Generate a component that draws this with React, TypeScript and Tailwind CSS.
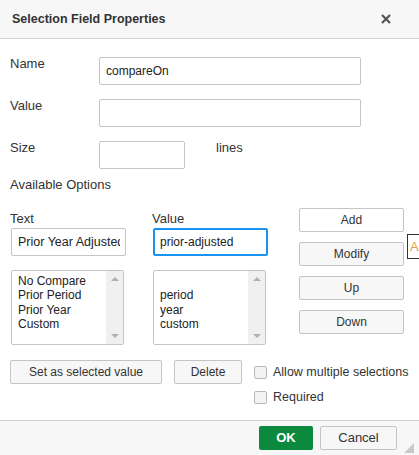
import React from "react";

const font = { fontFamily: '"Liberation Sans", Arial, sans-serif' };

const ListBox = ({ items }: { items: string[] }) => (
  <div className="flex h-[75px] w-[113px] border border-[#c4c4c4] bg-white rounded-[2px]">
    <div className="flex-1 pl-[6px] pt-[3px] text-[12px] leading-[14.4px] text-[#222] overflow-hidden">
      {items.map((it, i) => (
        <div key={i} className="h-[14.4px] whitespace-nowrap">
          {it}
        </div>
      ))}
    </div>
    <div className="w-[17px] bg-[#f0f0f0] flex flex-col items-center justify-between py-[6px]">
      <div className="w-0 h-0 border-l-[4px] border-r-[4px] border-b-[4px] border-l-transparent border-r-transparent border-b-[#b0b0b0]" />
      <div className="w-0 h-0 border-l-[4px] border-r-[4px] border-t-[4px] border-l-transparent border-r-transparent border-t-[#b0b0b0]" />
    </div>
  </div>
);

const SideButton = ({ label, white }: { label: string; white?: boolean }) => (
  <button
    className={`h-[24px] w-[105px] border border-[#c4c4c4] rounded-[2px] text-[12px] leading-[14px] text-[#333] ${
      white ? "bg-white" : "bg-[#f7f7f7]"
    }`}
  >
    {label}
  </button>
);

export default function App() {
  return (
    <div style={font} className="relative w-[419px] h-[455px] bg-white text-[#333] overflow-hidden">
      {/* Header */}
      <div className="h-[39px] bg-[#f7f7f7] border-b border-[#d0d0d0] flex items-center justify-between pl-[12px] pr-[28px]">
        <span className="text-[12.5px] font-bold text-[#333]">Selection Field Properties</span>
        <svg width="10" height="10" viewBox="0 0 10 10">
          <path d="M1 1L9 9M9 1L1 9" stroke="#555" strokeWidth="2.2" />
        </svg>
      </div>

      {/* Body */}
      <div className="pl-[10px] pt-[17px] h-[381px]">
        <div className="flex items-start">
          <span className="w-[89px] text-[13px] leading-[15px]">Name</span>
          <div className="mt-[1px] h-[28px] w-[262px] border border-[#c4c4c4] rounded-[2px] flex items-center pl-[6px] text-[12px] text-[#222]">
            compareOn
          </div>
        </div>
        <div className="flex items-start mt-[13px]">
          <span className="w-[89px] text-[13px] leading-[15px]">Value</span>
          <div className="mt-[1px] h-[28px] w-[262px] border border-[#c4c4c4] rounded-[2px]" />
        </div>
        <div className="flex items-start mt-[13px]">
          <span className="w-[89px] text-[13px] leading-[15px]">Size</span>
          <div className="mt-[1px] h-[28px] w-[86px] border border-[#c4c4c4] rounded-[2px]" />
          <span className="ml-[31px] text-[13px] leading-[15px]">lines</span>
        </div>
        <div className="mt-[8px] text-[13px] leading-[15px]">Available Options</div>

        <div className="flex mt-[16px]">
          <div className="w-[289px]">
            <div className="flex text-[13px] leading-[15px] mt-[3px]">
              <span className="w-[142px]">Text</span>
              <span>Value</span>
            </div>
            <div className="flex mt-[2px] pl-[1px]">
              <div className="h-[28px] w-[115px] border border-[#c4c4c4] rounded-[2px] flex items-center pl-[6px] pr-[5px] text-[12.5px] text-[#222]">
                <div className="overflow-hidden whitespace-nowrap">Prior Year Adjusted</div>
              </div>
              <div className="ml-[27px] h-[28px] w-[115px] border-2 border-[#1a93f0] rounded-[2px] flex items-center pl-[5px] text-[12px] text-[#222]">
                prior-adjusted
              </div>
            </div>
            <div className="flex mt-[14px] pl-[1px]">
              <ListBox items={["No Compare", "Prior Period", "Prior Year", "Custom"]} />
              <div className="ml-[29px]">
                <ListBox items={["", "period", "year", "custom"]} />
              </div>
            </div>
          </div>
          <div className="flex flex-col gap-[10px]">
            <SideButton label="Add" white />
            <SideButton label="Modify" />
            <SideButton label="Up" />
            <SideButton label="Down" />
          </div>
        </div>

        <div className="flex items-start mt-[15px]">
          <button className="h-[24px] w-[152px] border border-[#c4c4c4] rounded-[2px] bg-[#f7f7f7] text-[12px] leading-[14px] text-[#333]">
            Set as selected value
          </button>
          <button className="ml-[12px] h-[24px] w-[68px] border border-[#c4c4c4] rounded-[2px] bg-[#f7f7f7] text-[12px] leading-[14px] text-[#333]">
            Delete
          </button>
          <div className="ml-[12px] mt-[6px] flex flex-col gap-[12px] text-[12.5px] leading-[13px]">
            <label className="flex items-center gap-[6px] whitespace-nowrap">
              <span className="w-[13px] h-[13px] border border-[#b8b8b8] rounded-[2px] bg-[#f3f3f3]" />
              Allow multiple selections
            </label>
            <label className="flex items-center gap-[6px]">
              <span className="w-[13px] h-[13px] border border-[#b8b8b8] rounded-[2px] bg-[#f3f3f3]" />
              Required
            </label>
          </div>
        </div>
      </div>

      {/* Footer */}
      <div className="h-[35px] bg-[#f7f7f7] border-t border-[#d0d0d0] flex items-center justify-end pr-[22px] gap-[7px]">
        <button className="h-[24px] w-[54px] bg-[#0b8a3e] rounded-[2px] text-white font-bold text-[13px]">
          OK
        </button>
        <button className="h-[24px] w-[77px] border border-[#c4c4c4] rounded-[2px] bg-[#f7f7f7] text-[13px] text-[#333]">
          Cancel
        </button>
      </div>

      {/* resize grip */}
      <div className="absolute right-[5px] bottom-[2px] w-0 h-0 border-l-[10px] border-b-[10px] border-l-transparent border-b-[#c8c8c8]" />

      {/* tooltip peeking */}
      <div className="absolute left-[407px] top-[234px] w-[20px] h-[25px] border border-[#333] bg-white flex items-center pl-[2px] text-[13px] text-[#e8a13a]">
        A
      </div>
    </div>
  );
}
